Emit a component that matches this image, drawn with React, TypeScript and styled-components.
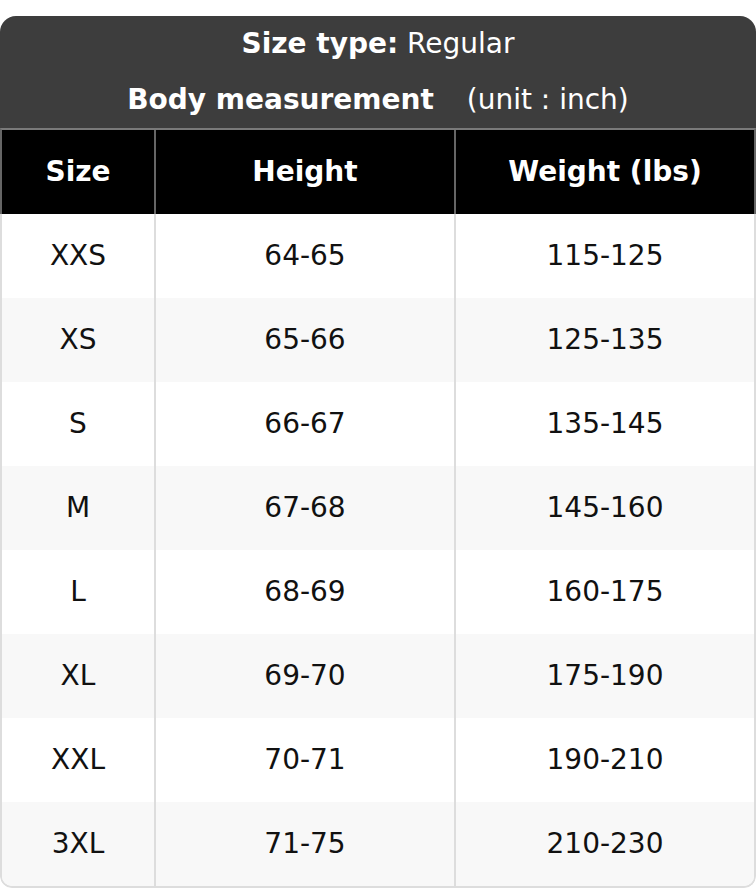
import React from 'react';
import styled, { createGlobalStyle } from 'styled-components';

const GlobalStyle = createGlobalStyle`
  html, body {
    margin: 0;
    padding: 0;
    background: #ffffff;
  }
  body {
    font-family: "DejaVu Sans", "Liberation Sans", sans-serif;
  }
`;

const Card = styled.div`
  width: 756px;
  margin-top: 16px;
  border-radius: 16px 16px 12px 12px;
  overflow: hidden;
`;

const Title = styled.div`
  background: #3d3d3d;
  color: #ffffff;
  text-align: center;
  font-size: 28px;
  line-height: 56px;
`;

const TitleLine = styled.div`
  white-space: nowrap;
`;

const Strong = styled.b`
  font-weight: 700;
`;

const Unit = styled.span`
  margin-left: 24px;
`;

const HeadRow = styled.div`
  display: grid;
  grid-template-columns: 154px 300px 1fr;
  background: #000000;
  border-top: 2px solid #7a7a7a;
  border-left: 2px solid #666666;
  border-right: 2px solid #666666;
`;

const HeadCell = styled.div<{ $last?: boolean }>`
  box-sizing: border-box;
  height: 84px;
  padding-bottom: 2px;
  display: flex;
  align-items: center;
  justify-content: center;
  color: #ffffff;
  font-size: 28px;
  font-weight: 700;
  border-right: ${(p) => (p.$last ? 'none' : '2px solid #666666')};
`;

const Body = styled.div`
  border: 2px solid #dddddd;
  border-top: none;
  border-radius: 0 0 12px 12px;
  overflow: hidden;
`;

const Row = styled.div<{ $striped: boolean }>`
  display: grid;
  grid-template-columns: 154px 300px 1fr;
  background: ${(p) => (p.$striped ? '#f8f8f8' : '#ffffff')};
`;

const Cell = styled.div<{ $last?: boolean }>`
  box-sizing: border-box;
  height: 84px;
  padding-bottom: 2px;
  display: flex;
  align-items: center;
  justify-content: center;
  color: #111111;
  font-size: 28px;
  border-right: ${(p) => (p.$last ? 'none' : '2px solid #dddddd')};
`;

const rows = [
  { size: 'XXS', height: '64-65', weight: '115-125' },
  { size: 'XS', height: '65-66', weight: '125-135' },
  { size: 'S', height: '66-67', weight: '135-145' },
  { size: 'M', height: '67-68', weight: '145-160' },
  { size: 'L', height: '68-69', weight: '160-175' },
  { size: 'XL', height: '69-70', weight: '175-190' },
  { size: 'XXL', height: '70-71', weight: '190-210' },
  { size: '3XL', height: '71-75', weight: '210-230' },
];

const App: React.FC = () => {
  return (
    <>
      <GlobalStyle />
      <Card>
        <Title>
          <TitleLine>
            <Strong>Size type:</Strong> Regular
          </TitleLine>
          <TitleLine>
            <Strong>Body measurement</Strong> <Unit>(unit : inch)</Unit>
          </TitleLine>
        </Title>
        <HeadRow>
          <HeadCell>Size</HeadCell>
          <HeadCell>Height</HeadCell>
          <HeadCell $last>Weight (lbs)</HeadCell>
        </HeadRow>
        <Body>
          {rows.map((r, i) => (
            <Row key={r.size} $striped={i % 2 === 1}>
              <Cell>{r.size}</Cell>
              <Cell>{r.height}</Cell>
              <Cell $last>{r.weight}</Cell>
            </Row>
          ))}
        </Body>
      </Card>
    </>
  );
};

export default App;
